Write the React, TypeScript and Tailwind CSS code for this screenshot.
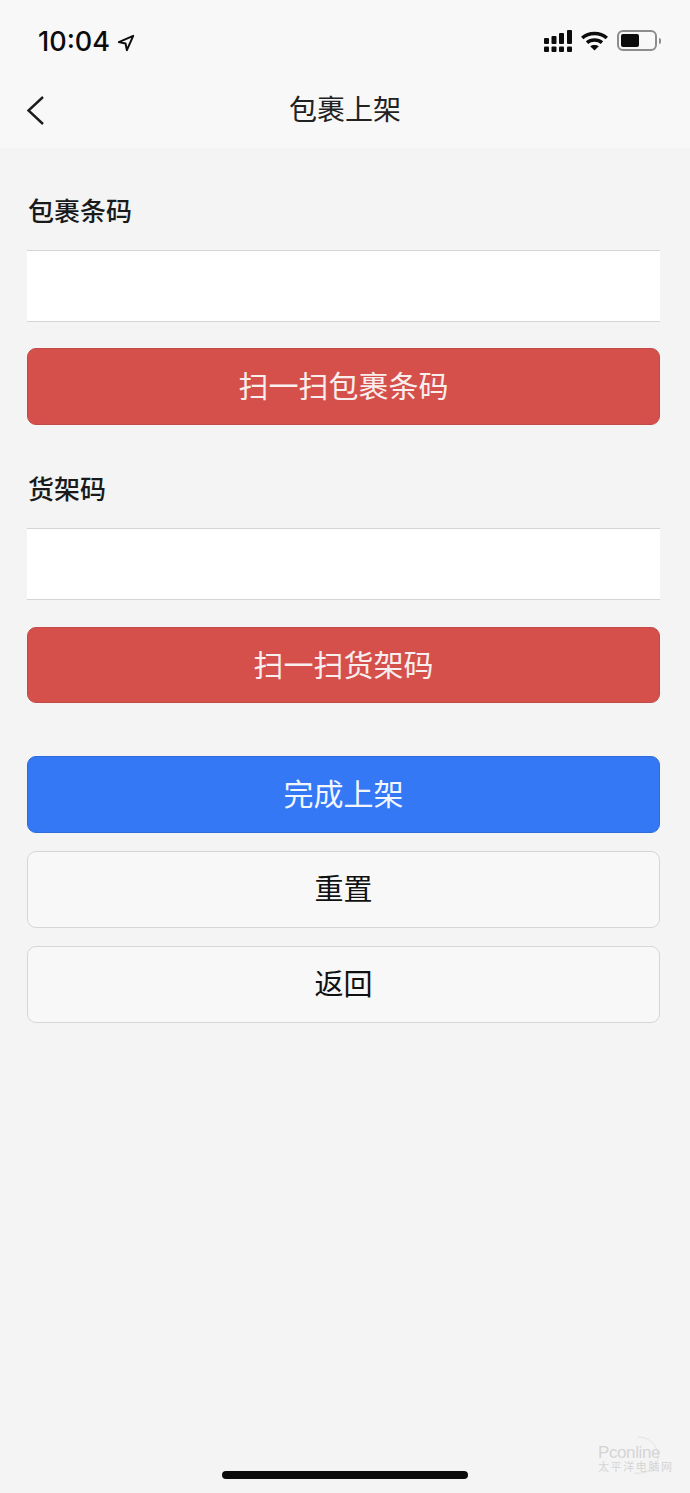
import React from "react";

const cjk = "font-['Liberation_Sans','Noto_Sans_CJK_SC',sans-serif]";

const StatusIcons = () => (
  <div className="flex items-center gap-[9px]">
    {/* cell signal, dual row */}
    <svg width="28" height="22" viewBox="0 0 28 22" fill="#0c0c0c">
      <rect x="0" y="8" width="5" height="6" rx="1" />
      <rect x="7.5" y="6" width="5" height="8" rx="1" />
      <rect x="15" y="3" width="5" height="11" rx="1" />
      <rect x="23" y="0" width="5" height="14" rx="1" />
      <rect x="0" y="16.5" width="5" height="5.5" rx="1" />
      <rect x="7.5" y="16.5" width="5" height="5.5" rx="1" />
      <rect x="15" y="16.5" width="5" height="5.5" rx="1" />
      <rect x="23" y="16.5" width="5" height="5.5" rx="1" />
    </svg>
    {/* wifi */}
    <svg width="27" height="20" viewBox="0 0 27 20" fill="none" stroke="#0c0c0c" strokeWidth="3.6">
      <path d="M1.2 7 C8 1 19 1 25.8 7" />
      <path d="M6 11.6 C10 8.2 17 8.2 21 11.6" />
      <path d="M13.5 19.6 L9.2 15.3 C11.5 13.6 15.5 13.6 17.8 15.3 Z" fill="#0c0c0c" stroke="none" />
    </svg>
    {/* battery */}
    <div className="flex items-center gap-[2px]">
      <div className="w-[40px] h-[21px] rounded-[6px] border-2 border-[#8c8c8c] p-[2px]">
        <div className="w-[18px] h-full rounded-[2px] bg-[#0c0c0c]" />
      </div>
      <div className="w-[2px] h-[6px] rounded-r-full bg-[#8c8c8c]" />
    </div>
  </div>
);

const Label = ({ children, mt }: { children: React.ReactNode; mt: string }) => (
  <div className={`${mt} h-[34px] pl-[1px] leading-[36px] text-[26px] font-medium text-[#1a1a1a]`}>{children}</div>
);

const Field = () => <div className="mt-[22px] h-[72px] bg-white border-y border-[#d4d4d4]" />;

const Button = ({
  text,
  kind,
  mt,
  h = "h-[77px]",
}: {
  text: string;
  kind: "red" | "blue" | "plain";
  mt: string;
  h?: string;
}) => {
  const styles = {
    red: "bg-[#d5504b] border-[#c24a46] text-[#f8eeee] text-[30px]",
    blue: "bg-[#3478f6] border-[#2f6cd9] text-[#f2f6ff] text-[30px]",
    plain: "bg-[#f8f8f8] border-[#d6d6d6] text-[#111111] text-[29px] pt-[2px]",
  };
  return (
    <div className={`${mt} ${h} rounded-[9px] border flex items-center justify-center ${styles[kind]}`}>
      {text}
    </div>
  );
};

export default function App() {
  return (
    <div className={`relative w-[690px] h-[1493px] overflow-hidden bg-[#f4f4f5] ${cjk}`}>
      <header className="h-[148px] bg-[#f8f8f8]">
        {/* status bar */}
        <div className="h-[72px] pl-[38px] pr-[29px] pt-[9px] flex items-center justify-between">
          <div className="flex items-center gap-[7px] pt-[4px]">
            <span className="text-[27px] font-['Inter',sans-serif] font-medium text-[#0c0c0c]">10:04</span>
            <svg width="18" height="18" viewBox="0 0 20 20" fill="none" stroke="#0c0c0c" strokeWidth="2.2" strokeLinejoin="round">
              <path d="M2 9 L18 2 L11 18 L9.5 10.5 Z" />
            </svg>
          </div>
          <StatusIcons />
        </div>
        {/* nav bar */}
        <div className="relative h-[76px] flex items-center justify-center pt-[1px]">
          <svg className="absolute left-[26px] top-[23px]" width="20" height="30" viewBox="0 0 20 30" fill="none" stroke="#1c1c1c" strokeWidth="2.4">
            <path d="M17 2 L2.5 15.5 L17 29" />
          </svg>
          <span className="text-[28px] text-[#222222]">包裹上架</span>
        </div>
      </header>

      <main className="px-[27px] w-[687px]">
        <Label mt="mt-[46px]">包裹条码</Label>
        <Field />
        <Button text="扫一扫包裹条码" kind="red" mt="mt-[26px]" />
        <Label mt="mt-[47px]">货架码</Label>
        <Field />
        <Button text="扫一扫货架码" kind="red" mt="mt-[27px]" h="h-[76px]" />
        <Button text="完成上架" kind="blue" mt="mt-[53px]" />
        <Button text="重置" kind="plain" mt="mt-[18px]" />
        <Button text="返回" kind="plain" mt="mt-[18px]" />
      </main>

      {/* watermark */}
      <div className="absolute left-[598px] top-[1436px] w-[78px] text-[#d4d4d4] leading-none">
        <svg className="absolute left-[22px] top-0" width="40" height="40" viewBox="0 0 40 40" fill="none" stroke="#e2e2e2" strokeWidth="1">
          <path d="M18 1 C30 1 38 10 38 20 C38 31 28 39 14 37" />
        </svg>
        <div className="relative mt-[8px] text-[17px] tracking-[-0.4px]">Pconline</div>
        <div className="relative text-[11px] mt-[1px] tracking-[1.6px] whitespace-nowrap">太平洋电脑网</div>
      </div>

      {/* home indicator */}
      <div className="absolute left-[222px] top-[1471px] w-[246px] h-[8px] rounded-full bg-[#0a0a0a]" />
    </div>
  );
}
